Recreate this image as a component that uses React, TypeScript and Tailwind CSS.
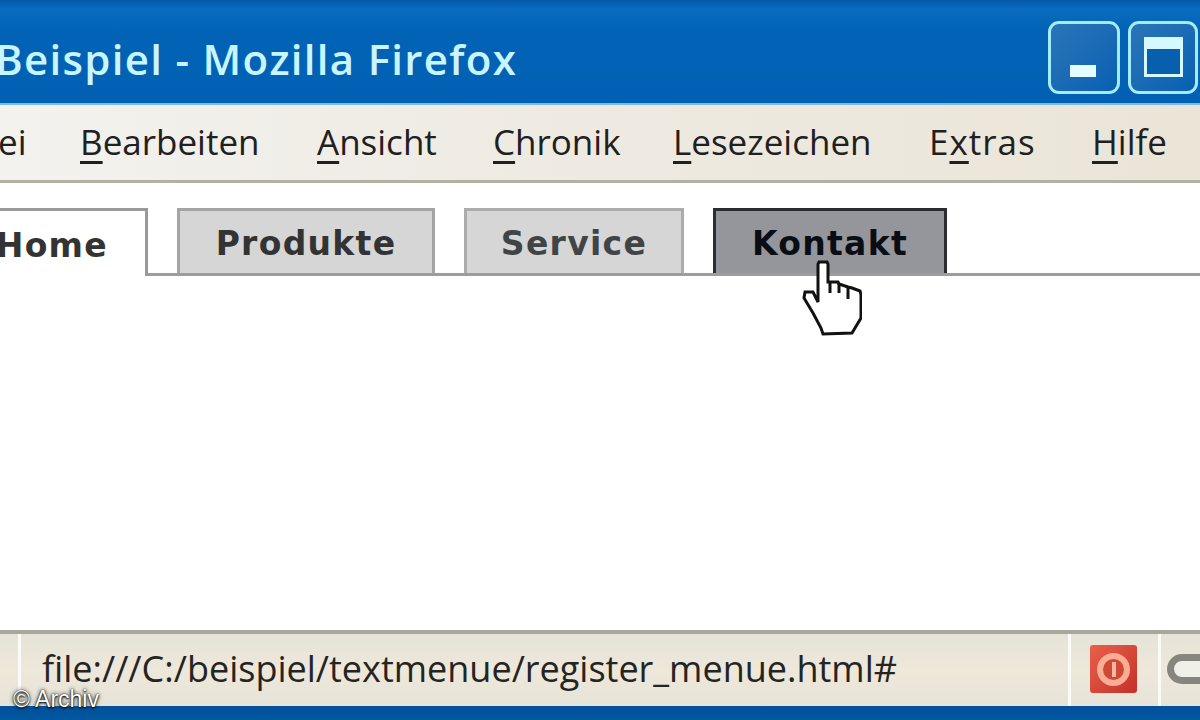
const menuItems = [
  { first: "", rest: "ei", w: "w-[82px]", cls: "-ml-[2px]" },
  { first: "B", rest: "earbeiten", w: "w-[237px]", cls: "" },
  { first: "A", rest: "nsicht", w: "w-[176px]", cls: "" },
  { first: "C", rest: "hronik", w: "w-[180px]", cls: "" },
  { first: "L", rest: "esezeichen", w: "w-[256px]", cls: "" },
  { first: "", rest: "", w: "w-[163px]", cls: "tracking-[1px]", extras: true },
  { first: "H", rest: "ilfe", w: "w-[100px]", cls: "" },
];

function HandCursor() {
  return (
    <svg viewBox="0 0 60 76" className="absolute left-[802px] top-[260px] w-[60px] h-[76px]">
      <path
        d="M17 2 L25 2 L26 4 L26 22 L36 22 L37 24 L46 27 L50 28 L58 31 L59 35 L59 58 L50 73 L21 74 L19 68 L11 53 L2 38 L3 32 L11 32 L16 42 L16 4 Z"
        fill="#ffffff"
        stroke="#111111"
        strokeWidth="3"
        strokeLinejoin="miter"
      />
      <path d="M28 22 L28 33 M37 23 L37 33 M46 27 L46 39" stroke="#111111" strokeWidth="3" fill="none" />
    </svg>
  );
}

export default function App() {
  return (
    <div className="relative w-[1200px] h-[720px] overflow-hidden bg-white flex flex-col font-['Liberation_Sans',sans-serif]">
      {/* title bar */}
      <div className="h-[105px] shrink-0 flex justify-between border-b-[2px] border-[#7fb8ea] bg-[linear-gradient(to_bottom,#0559a8_0%,#0a6cc0_9%,#0263b6_30%,#0160b2_100%)]">
        <span className="-ml-[5px] pt-[38px] text-[42px] leading-none font-semibold tracking-[1.3px] whitespace-nowrap text-[#c9f5ff] font-['Open_Sans',sans-serif]">
          Beispiel - Mozilla Firefox
        </span>
        <div className="flex gap-[8px] mr-[2px] pt-[21px]">
          <div className="w-[72px] h-[73px] rounded-[11px] border-[3px] border-[#a5ecfb] bg-gradient-to-br from-[#2a75b8] to-[#0560b2] flex items-end justify-center pb-[14px] pr-[2px]">
            <div className="w-[26px] h-[12px] bg-[#e4fbff]" />
          </div>
          <div className="w-[70px] h-[73px] rounded-[11px] border-[3px] border-[#a5ecfb] bg-gradient-to-br from-[#2a75b8] to-[#0560b2] flex items-start justify-center pt-[13px]">
            <div className="w-[39px] h-[40px] border-[3px] border-t-[12px] border-[#d6f8ff] bg-[#075fae]" />
          </div>
        </div>
      </div>

      {/* menu bar */}
      <div className="h-[78px] shrink-0 flex items-center pb-[2px] border-b-[3px] border-[#b4b1a4] bg-gradient-to-r from-[#f3f2ee] via-[#eeeae1] to-[#ebe5d8] text-[35px] leading-none text-[#20201e] font-['Open_Sans',sans-serif]">
        {menuItems.map((m, i) => (
          <span key={i} className={`${m.w} ${m.cls} shrink-0 whitespace-nowrap`}>
            {m.extras ? (
              <>E<span className="underline underline-offset-[6px]">x</span>tras</>
            ) : (
              <>
                {m.first && <span className="underline underline-offset-[6px]">{m.first}</span>}
                {m.rest}
              </>
            )}
          </span>
        ))}
      </div>

      {/* tab row */}
      <div className="h-[93px] shrink-0 flex items-end gap-[29px] border-b-[3px] border-[#9d9d9d] text-[33px] tracking-[1.3px] font-bold leading-none font-['DejaVu_Sans',sans-serif]">
        <div className="w-[148px] h-[68px] -mb-[3px] pt-[3px] bg-white border-t-[3px] border-r-[3px] border-[#9a9a9a] flex items-center justify-end pr-[37px] text-[#333333]">
          Home
        </div>
        <div className="w-[258px] h-[65px] pt-[3px] bg-[#d6d6d6] border-[3px] border-b-0 border-[#a4a4a4] flex items-center justify-center text-[#333333]">
          Produkte
        </div>
        <div className="w-[220px] h-[65px] pt-[3px] bg-[#d6d6d6] border-[3px] border-b-0 border-[#acacac] flex items-center justify-center text-[#3f4446]">
          Service
        </div>
        <div className="w-[234px] h-[65px] pt-[3px] bg-[#94969c] border-[3px] border-b-0 border-[#2a2c30] flex items-center justify-center text-[#0b0d14]">
          Kontakt
        </div>
      </div>

      <div className="flex-1 bg-white" />

      {/* status bar */}
      <div className="h-[76px] shrink-0 flex items-center border-t-[4px] border-[#a9a79a] bg-gradient-to-b from-[#e5e3d8] via-[#eee8da] to-[#e6e3d8] text-[36px] leading-none text-[#242422]">
        <div className="w-[21px] h-full shrink-0 border-r-[3px] border-[#fafaf6]" />
        <span className="w-[1047px] shrink-0 pl-[21px] pb-[2px] whitespace-nowrap font-['Open_Sans',sans-serif]">
          file:///C:/beispiel/textmenue/register_menue.html#
        </span>
        <div className="w-[93px] h-full shrink-0 flex items-center pl-[19px] border-x-[3px] border-[#fafaf6]">
          <div className="w-[47px] h-[48px] mb-[2px] rounded-[3px] bg-gradient-to-br from-[#e8604a] to-[#c4302a] flex items-center justify-center">
            <div className="w-[33px] h-[33px] rounded-full border-[6px] border-[#f9ae94] bg-[#cf4a36] flex items-center justify-center">
              <div className="w-[4px] h-[15px] bg-[#f4b8a2]" />
            </div>
          </div>
        </div>
        <div className="w-[39px] h-full shrink-0 flex items-center pl-[6px]">
          <div className="w-[50px] h-[30px] mb-[2px] shrink-0 rounded-full border-[7px] border-[#86867e] bg-[#f0efe8]" />
        </div>
      </div>

      {/* bottom window edge */}
      <div className="h-[14px] shrink-0 bg-gradient-to-b from-[#03509a] to-[#01589f]" />

      <HandCursor />

      {/* photo credit over the screenshot */}
      <span className="absolute left-[13px] top-[688px] text-[23px] leading-none text-white [text-shadow:0_1px_2px_#000,0_0_4px_#222,0_0_1px_#000]">
        © Archiv
      </span>
    </div>
  );
}
